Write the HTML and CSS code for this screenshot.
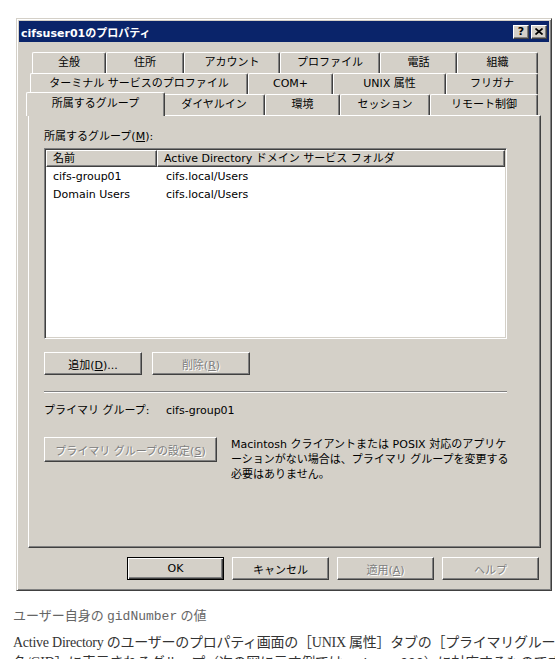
FILE: index.html
```html
<!DOCTYPE html>
<html lang="ja">
<head>
  <meta charset="UTF-8">
  <meta name="viewport" content="width=device-width, initial-scale=1.0">
  <title>cifsuser01のプロパティ</title>
  <link rel="stylesheet" href="styles.css">
</head>
<body>
  <div class="window">
    <div class="titlebar">
      <span class="title">cifsuser01のプロパティ</span>
      <div class="title-buttons">
        <span class="tbtn">?</span>
        <span class="tbtn">
          <svg width="8" height="7" viewBox="0 0 8 7"><path d="M0.5 0.5 L7.5 6.5 M7.5 0.5 L0.5 6.5" stroke="#000" stroke-width="1.7" fill="none"/></svg>
        </span>
      </div>
    </div>

    <div class="tabs">
      <div class="tab-row row1">
        <div class="tab">全般</div>
        <div class="tab">住所</div>
        <div class="tab">アカウント</div>
        <div class="tab">プロファイル</div>
        <div class="tab">電話</div>
        <div class="tab">組織</div>
      </div>
      <div class="tab-row row2">
        <div class="tab">ターミナル サービスのプロファイル</div>
        <div class="tab">COM+</div>
        <div class="tab">UNIX 属性</div>
        <div class="tab">フリガナ</div>
      </div>
      <div class="tab-row row3">
        <div class="tab active">所属するグループ</div>
        <div class="tab">ダイヤルイン</div>
        <div class="tab">環境</div>
        <div class="tab">セッション</div>
        <div class="tab">リモート制御</div>
      </div>
    </div>

    <div class="panel">
      <div class="label">所属するグループ(<u>M</u>):</div>
      <div class="listview">
        <div class="lv-header">
          <div class="lv-head">名前</div>
          <div class="lv-head">Active Directory ドメイン サービス フォルダ</div>
        </div>
        <div class="lv-body">
          <div class="lv-row"><span class="lv-name">cifs-group01</span><span>cifs.local/Users</span></div>
          <div class="lv-row"><span class="lv-name">Domain Users</span><span>cifs.local/Users</span></div>
        </div>
      </div>

      <div class="btn-row">
        <button class="btn">追加(<u>D</u>)...</button>
        <button class="btn" disabled>削除(<u>R</u>)</button>
      </div>

      <div class="separator"></div>

      <div class="primary">
        <span class="primary-label">プライマリ グループ:</span>
        <span>cifs-group01</span>
      </div>

      <div class="set-row">
        <button class="btn set-btn" disabled>プライマリ グループの設定(<u>S</u>)</button>
        <p class="hint">Macintosh クライアントまたは POSIX 対応のアプリケ<br>ーションがない場合は、プライマリ グループを変更する<br>必要はありません。</p>
      </div>
    </div>

    <div class="dialog-buttons">
      <button class="btn default">OK</button>
      <button class="btn">キャンセル</button>
      <button class="btn" disabled>適用(<u>A</u>)</button>
      <button class="btn" disabled>ヘルプ</button>
    </div>
  </div>

  <div class="note">
    <p class="term">ユーザー自身の <code>gidNumber</code> の値</p>
    <p class="desc">Active Directory のユーザーのプロパティ画面の［UNIX 属性］タブの［プライマリグループ<br>名/GID］に表示されるグループ（次の図に示す例では <code>unixgrp999</code>）に対応するものです。</p>
  </div>
</body>
</html>
```

FILE: styles.css
```css
* {
  box-sizing: border-box;
}

body {
  margin: 0;
  width: 555px;
  height: 659px;
  overflow: hidden;
  background: #fff;
}

/* dialog frame */
.window {
  margin: 18px 0 0 16px;
  width: 536px;
  padding: 2px 2px 10px;
  background: #d4d0c8;
  border: 1px solid;
  border-color: #d4d0c8 #404040 #404040 #d4d0c8;
  box-shadow: inset 1px 1px #fff, inset -1px -1px #808080;
  font: 11px "DejaVu Sans", "Noto Sans CJK JP", sans-serif;
  color: #000;
}

.titlebar {
  display: flex;
  align-items: center;
  justify-content: space-between;
  height: 21px;
  padding: 0 2px 0 2px;
  background: #0a246a;
  color: #fff;
  font-weight: bold;
}

.title-buttons {
  display: flex;
  gap: 2px;
}

.tbtn {
  display: flex;
  align-items: center;
  justify-content: center;
  width: 16px;
  height: 14px;
  background: #d4d0c8;
  color: #000;
  border: 1px solid;
  border-color: #fff #404040 #404040 #fff;
  box-shadow: inset -1px -1px #808080;
  font-size: 11px;
  font-weight: bold;
  line-height: 1;
}

/* tab strip, three rows */
.tabs {
  margin-top: 10px;
}

.tab-row {
  display: grid;
  height: 21px;
}

.row1 {
  margin-left: 13px;
  grid-template-columns: 74px 78px 96px 100px 77px 81px;
}

.row2 {
  margin-left: 11px;
  grid-template-columns: 218px 85px 113px 92px;
}

.row3 {
  margin-left: 9px;
  grid-template-columns: 135px 102px 75px 90px 108px;
}

.tab {
  border: 1px solid;
  border-color: #fff #404040 transparent #fff;
  border-bottom: none;
  border-radius: 2px 2px 0 0;
  box-shadow: inset -1px 0 #808080;
  text-align: center;
  line-height: 19px;
  white-space: nowrap;
  overflow: hidden;
}

.tab.active {
  position: relative;
  z-index: 1;
  margin: -2px -2px -1px -2px;
  padding-top: 1px;
  background: #d4d0c8;
}

/* tab page */
.panel {
  margin-left: 9px;
  width: 513px;
  height: 433px;
  padding: 14px 0 0 15px;
  border: 1px solid;
  border-color: #fff #404040 #404040 #fff;
  box-shadow: inset -1px -1px #808080;
}

.label {
  line-height: 14px;
}

.listview {
  margin-top: 4px;
  width: 463px;
  height: 191px;
  padding: 1px;
  background: #fff;
  border: 1px solid;
  border-color: #808080 #fff #fff #808080;
  box-shadow: inset 1px 1px #404040, inset -1px -1px #d4d0c8;
}

.lv-header {
  display: grid;
  grid-template-columns: 111px 1fr;
  height: 17px;
}

.lv-head {
  padding-left: 6px;
  line-height: 15px;
  background: #d4d0c8;
  border: 1px solid;
  border-color: #fff #404040 #404040 #fff;
  box-shadow: inset -1px -1px #808080;
  white-space: nowrap;
  overflow: hidden;
}

.lv-body {
  padding-top: 1px;
}

.lv-row {
  display: flex;
  height: 18px;
  line-height: 18px;
}

.lv-name {
  width: 113px;
  padding-left: 7px;
}

.lv-row span:last-child {
  padding-left: 7px;
}

/* push buttons */
.btn {
  width: 98px;
  height: 23px;
  padding: 0;
  font: inherit;
  color: #000;
  background: #d4d0c8;
  border: 1px solid;
  border-color: #fff #404040 #404040 #fff;
  box-shadow: inset -1px -1px #808080;
  border-radius: 0;
}

.btn:disabled {
  color: #808080;
  text-shadow: 1px 1px #fff;
}

.btn.default {
  border-color: #000;
  box-shadow: inset 1px 1px #fff, inset -1px -1px #404040, inset -2px -2px #808080;
}

.btn-row {
  display: flex;
  gap: 10px;
  margin-top: 13px;
}

.separator {
  margin-top: 16px;
  width: 463px;
  height: 2px;
  border-top: 1px solid #808080;
  border-bottom: 1px solid #fff;
}

.primary {
  display: flex;
  margin-top: 11px;
  line-height: 14px;
}

.primary-label {
  width: 122px;
}

.set-row {
  display: flex;
  align-items: flex-start;
  gap: 14px;
  margin-top: 19px;
}

.set-btn {
  width: 173px;
  height: 25px;
}

.hint {
  margin: 0;
  line-height: 15px;
  white-space: nowrap;
}

.dialog-buttons {
  display: flex;
  justify-content: flex-end;
  gap: 8px;
  margin-top: 9px;
  padding-right: 10px;
}

.dialog-buttons .btn {
  width: 97px;
}

/* explanatory text under the dialog */
.note {
  margin-left: 13px;
  font-family: "Liberation Serif", "Noto Sans CJK JP", serif;
  white-space: nowrap;
}

.note p {
  margin: 0;
}

.term {
  margin-top: 15px !important;
  font-size: 13px;
  line-height: 20px;
  color: #666;
}

.desc {
  margin-top: 6px !important;
  font-size: 14px;
  line-height: 20px;
  letter-spacing: -0.25px;
  color: #333;
}

.note code {
  font-family: "Liberation Mono", monospace;
  font-size: 13px;
  letter-spacing: 0;
}
```
